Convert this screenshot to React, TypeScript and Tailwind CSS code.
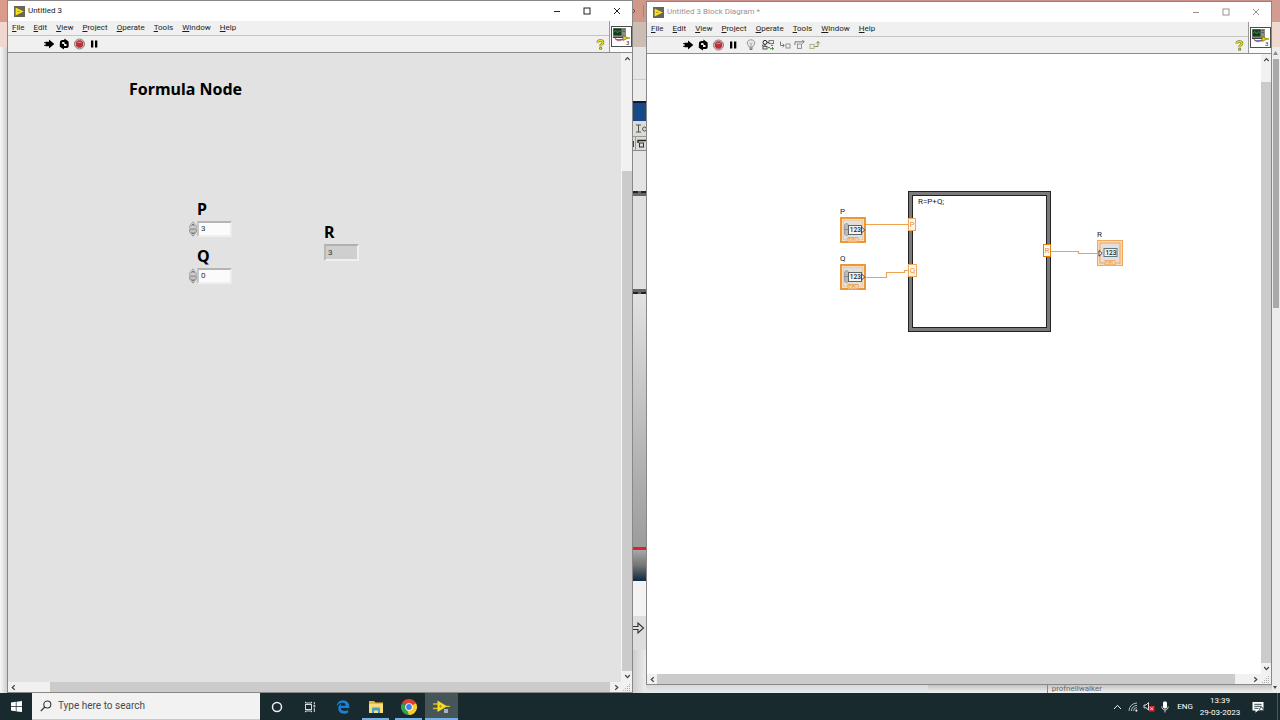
import React from 'react';
import { FaEdgeLegacy } from 'react-icons/fa6';

interface WindowProps {
  title: string;
  active: boolean;
  tools?: React.ReactNode;
  vTrack: string;
  hTrack: string;
  hEnd: string;
  children: React.ReactNode;
}

const MENUS = ['File', 'Edit', 'View', 'Project', 'Operate', 'Tools', 'Window', 'Help'];

const LabviewIcon = () => (
  <svg viewBox="0 0 11 11" className="w-[11px] h-[11px] shrink-0">
    <rect width="11" height="11" fill="#66655a" />
    <path d="M1.6 1.5 L9.8 5.4 L1.6 9.4 Z" fill="#f6e11c" />
    <path d="M3 5.4 H5.6" stroke="#b99b13" strokeWidth="1" />
  </svg>
);

const Chevron = ({ dir }: { dir: 'up' | 'down' | 'left' | 'right' }) => {
  const paths = {
    up: 'M1.2 5.2 L3.5 2.6 L5.8 5.2',
    down: 'M1.2 2 L3.5 4.6 L5.8 2',
    left: 'M4.8 1.2 L2.2 3.5 L4.8 5.8',
    right: 'M2.2 1.2 L4.8 3.5 L2.2 5.8',
  };
  return (
    <svg viewBox="0 0 7 7" className="w-[7px] h-[7px]" fill="none" stroke="#444" strokeWidth="1.2">
      <path d={paths[dir]} />
    </svg>
  );
};

const ToolButton = ({ label, wide, children }: { label: string; wide?: boolean; children: React.ReactNode }) => (
  <button aria-label={label} className={wide ? 'w-4 h-3 shrink-0' : 'w-3 h-3 shrink-0'}>
    <svg viewBox={wide ? '0 0 16 12' : '0 0 12 12'} className="w-full h-full" fill="none">
      {children}
    </svg>
  </button>
);

const RunTools = () => (
  <>
    <ToolButton label="Run">
      <path d="M1 4.6 H3 M1 7.4 H3" stroke="#222" />
      <path d="M2.6 3.8 H6 V1.6 L11.3 6 L6 10.4 V8.2 H2.6 Z" fill="#000" />
    </ToolButton>
    <ToolButton label="Run Continuously">
      <path d="M3 6.2 V4.6 Q3 3 4.6 3 H7" stroke="#000" strokeWidth="2.2" />
      <path d="M6.4 .6 L10.6 3.4 V6 H6.4 Z" fill="#000" />
      <path d="M9.6 5.8 V7.4 Q9.6 9 8 9 H5.4" stroke="#000" strokeWidth="2.2" />
      <path d="M6 11.4 L1.8 8.7 V6 H6 Z" fill="#000" />
      <path d="M4.6 5.4 H6.6 M6 6.8 H8" stroke="#f0f0f0" />
    </ToolButton>
    <ToolButton label="Abort">
      <circle cx="6.5" cy="6" r="5" fill="#f3dcdc" stroke="#7c6d6d" strokeWidth="0.9" />
      <path d="M4.8 2.3 H8.2 L10.2 4.3 V7.7 L8.2 9.7 H4.8 L2.8 7.7 V4.3 Z" fill="#b5343a" />
      <path d="M4.4 4.4 H8.6" stroke="#dc8a8c" />
    </ToolButton>
    <ToolButton label="Pause">
      <rect x="3" y="2.5" width="2.3" height="7" fill="#000" />
      <rect x="7" y="2.5" width="2.3" height="7" fill="#000" />
    </ToolButton>
  </>
);

const DebugTools = () => (
  <div className="flex gap-[3px] ml-[3px]">
    <ToolButton label="Highlight Execution">
      <path d="M4.2 8 C4.2 6.6 2.2 6 2.2 4 C2.2 2 4 .8 6 .8 C8 .8 9.8 2 9.8 4 C9.8 6 7.8 6.6 7.8 8 Z" fill="#e9e9e6" stroke="#8d8d88" strokeWidth="0.9" />
      <path d="M4.8 3.5 L6 6 L7.2 3.5 M6 6 V8" stroke="#aaa" strokeWidth="0.8" />
      <path d="M4.4 9 H7.6 M4.6 10.4 H7.4" stroke="#777" strokeWidth="1.1" />
    </ToolButton>
    <ToolButton label="Retain Wire Values" wide>
      <circle cx="5" cy="3.4" r="2" stroke="#222" />
      <path d="M7 3.4 H9 M5 5.4 V7 M3 5.5 L2.6 7" stroke="#333" />
      <rect x="9" y="1.6" width="4.5" height="3" stroke="#666" strokeWidth="0.9" />
      <rect x="3" y="7.4" width="4" height="2.6" stroke="#444" strokeWidth="0.9" />
      <path d="M8 8.6 H10 M11 6.4 H13" stroke="#555" strokeWidth="0.9" />
      <path d="M10 9.6 H13.5 M12 8 L13.6 9.6 L12 11" stroke="#3b9a36" />
    </ToolButton>
    <ToolButton label="Step Into">
      <path d="M1.5 2.5 V6.5 H5 M3.6 4.8 L5.4 6.5 L3.6 8.2" stroke="#777" />
      <rect x="7" y="5" width="4" height="4" stroke="#888" strokeWidth="0.9" />
    </ToolButton>
    <ToolButton label="Step Over">
      <path d="M1 6 V2.8 H10 M8.4 1 L10.2 2.8 L8.4 4.6" stroke="#777" />
      <rect x="3.5" y="5" width="4" height="4.4" stroke="#888" strokeWidth="0.9" />
    </ToolButton>
    <ToolButton label="Step Out">
      <rect x="1" y="5.4" width="4" height="4" stroke="#a9a878" strokeWidth="0.9" />
      <path d="M5.5 7.5 H9 V2.8 M7.2 4.4 L9 2.4 L10.8 4.4" stroke="#8a8a50" />
    </ToolButton>
  </div>
);

const HelpIcon = () => (
  <svg viewBox="0 0 9 11" className="w-[9px] h-[11px]" fill="none">
    <path d="M1.8 3.6 C1.8 .8 7 .8 7 3.4 C7 5.2 4.6 5 4.6 7.2" stroke="#6a6818" strokeWidth="2.6" />
    <circle cx="4.6" cy="9.3" r="1.5" fill="#6a6818" />
    <path d="M1.8 3.6 C1.8 .8 7 .8 7 3.4 C7 5.2 4.6 5 4.6 7.2" stroke="#e6e01f" strokeWidth="1.5" />
    <circle cx="4.6" cy="9.3" r="0.9" fill="#e6e01f" />
  </svg>
);

const ViIcon = () => (
  <svg viewBox="0 0 21 21" className="w-[21px] h-[21px]">
    <rect x="0.5" y="0.5" width="20" height="20" fill="#fff" stroke="#4d4d4d" />
    <rect x="2" y="2" width="13" height="9" fill="#8b8e86" />
    <rect x="2.5" y="2.5" width="8" height="7" fill="#123f1b" />
    <path d="M3 6 L5 4.5 L6.5 7 L8 4.5 L10 6" stroke="#3f9b4a" fill="none" strokeWidth="0.8" />
    <path d="M11.5 3.5 H14 M11.5 5.5 H14" stroke="#54574f" strokeWidth="0.9" />
    <path d="M2 11.4 H13" stroke="#38281f" />
    <path d="M4 12 C5 15 9 15.5 12 13" stroke="#c26a93" fill="none" strokeWidth="1.3" />
    <path d="M5 13.5 H12" stroke="#4560a8" strokeWidth="0.8" />
    <path d="M12 9.5 L17 12 L12 14.5 Z" fill="#eed51e" stroke="#6d5d12" strokeWidth="0.7" />
    <path d="M16 12 H19" stroke="#b3a012" strokeWidth="1.6" />
    <text x="15" y="19" fontSize="6" fontFamily="Roboto, sans-serif" fill="#222">3</text>
  </svg>
);

const scrollBtn = 'flex items-center justify-center shrink-0';
const captionBtn = 'w-[30px] h-5 flex items-center justify-center';

const VWindow = ({ title, active, tools, vTrack, hTrack, hEnd, children }: WindowProps) => (
  <section className="flex-1 min-w-0 flex flex-col border border-[#8b8787] bg-white">
    <div className="flex items-center h-5 pl-[6px] shrink-0 bg-white">
      <LabviewIcon />
      <h1 className={`flex-1 ml-[3px] text-[8px] leading-3 ${active ? 'text-[#222]' : 'text-[#9b9292]'}`}>{title}</h1>
      <div className={`flex ${active ? 'text-[#222]' : 'text-[#a08f8f]'}`}>
        <button aria-label="Minimize" className={captionBtn}>
          <svg viewBox="0 0 8 8" className="w-2 h-2" stroke="currentColor" fill="none"><path d="M1 4.5 H7" /></svg>
        </button>
        <button aria-label="Maximize" className={captionBtn}>
          <svg viewBox="0 0 8 8" className="w-2 h-2" stroke="currentColor" fill="none"><rect x="1" y="1" width="6" height="6" /></svg>
        </button>
        <button aria-label="Close" className={captionBtn}>
          <svg viewBox="0 0 8 8" className="w-2 h-2" stroke="currentColor" fill="none"><path d="M1 1 L7 7 M7 1 L1 7" /></svg>
        </button>
      </div>
    </div>

    <div className="flex shrink-0 bg-[#f0f0f0] border-b border-[#8c8c8c]">
      <div className="flex-1 min-w-0">
        <nav className="flex gap-[9px] h-[15px] pl-1 items-center border-b border-[#c4c4c4] text-[8px] leading-3 text-[#1d1d1d]">
          {MENUS.map((m) => (
            <button key={m}>
              <span className="underline">{m[0]}</span>{m.slice(1)}
            </button>
          ))}
        </nav>
        <div className="flex items-center gap-[3px] h-4 pl-[35px] pr-1">
          <RunTools />
          {tools}
          <button aria-label="Context Help" className="ml-auto"><HelpIcon /></button>
        </div>
      </div>
      <div className="w-[23px] flex items-center justify-end border-l border-[#9a9a9a] bg-[#fafafa]">
        <ViIcon />
      </div>
    </div>

    <div className="flex flex-1 min-h-0">
      {children}
      <div className="w-[10px] flex flex-col shrink-0 bg-[#f1f1f1]">
        <button aria-label="Scroll up" className={`${scrollBtn} h-[11px]`}><Chevron dir="up" /></button>
        <div className={`shrink-0 ${vTrack}`} />
        <div className="flex-1 bg-[#cbcbcb]" />
        <button aria-label="Scroll down" className={`${scrollBtn} h-[11px]`}><Chevron dir="down" /></button>
      </div>
    </div>
    <div className="h-[10px] flex shrink-0 bg-[#f1f1f1]">
      <button aria-label="Scroll left" className={`${scrollBtn} w-[10px]`}><Chevron dir="left" /></button>
      <div className={hTrack} />
      <div className="flex-1 bg-[#cbcbcb]" />
      <div className={hEnd} />
      <button aria-label="Scroll right" className={`${scrollBtn} w-3`}><Chevron dir="right" /></button>
      <svg viewBox="0 0 10 10" className="w-[10px] h-[10px]" fill="#aaa">
        <path d="M7 2h1v1h-1z M5 4h1v1h-1z M7 4h1v1h-1z M3 6h1v1h-1z M5 6h1v1h-1z M7 6h1v1h-1z M1 8h1v1h-1z M3 8h1v1h-1z M5 8h1v1h-1z M7 8h1v1h-1z" />
      </svg>
    </div>
  </section>
);

const panelLabel = "font-['Noto_Sans','Open_Sans',sans-serif] text-[16px] leading-5 font-bold text-black";

const NumericControl = ({ name, value, className }: { name: string; value: string; className: string }) => (
  <div className={`absolute ${className}`}>
    <label htmlFor={`ctl-${name}`} className={`block pl-2 mb-px ${panelLabel}`}>{name}</label>
    <div className="flex h-[17px] items-center">
      <div className="flex flex-col w-2">
        <button aria-label={`Increment ${name}`}>
          <svg viewBox="0 0 8 8" className="w-2 h-2"><path d="M4 .8 L7.4 5 V7.4 H.6 V5 Z" fill="#d2d2d2" stroke="#a0a0a0" strokeWidth="0.9" /><path d="M2.4 5.2 L4 3 L5.6 5.2" fill="none" stroke="#555" strokeWidth="0.8" /></svg>
        </button>
        <button aria-label={`Decrement ${name}`}>
          <svg viewBox="0 0 8 8" className="w-2 h-2"><path d="M4 7.2 L7.4 3 V.6 H.6 V3 Z" fill="#c8c8c8" stroke="#909090" strokeWidth="0.9" /><path d="M2.4 2.8 L4 5 L5.6 2.8" fill="none" stroke="#555" strokeWidth="0.8" /></svg>
        </button>
      </div>
      <input
        id={`ctl-${name}`}
        defaultValue={value}
        className="w-[35px] h-4 pl-[2px] bg-[#fbfbfb] border-2 border-t-[#b4b4b4] border-l-[#c6c6c6] border-r-[#ececec] border-b-[#efefef] text-[8px] leading-3 text-[#333] outline-none"
      />
    </div>
  </div>
);

const FrontPanel = () => (
  <div className="relative flex-1 bg-[#e2e2e2] border-r border-[#f4f4f4]">
    <h2 className={`absolute left-[121px] top-[26px] whitespace-nowrap ${panelLabel}`}>Formula Node</h2>
    <NumericControl name="P" value="3" className="left-[181px] top-[146px]" />
    <NumericControl name="Q" value="0" className="left-[181px] top-[193px]" />
    <div className="absolute left-[316px] top-[169px]">
      <label htmlFor="ind-R" className={`block ${panelLabel}`}>R</label>
      <output id="ind-R" className="block w-[35px] h-[17px] mt-[2px] pl-[2px] bg-[#cfcfcf] border-2 border-t-[#b0b0b0] border-l-[#b8b8b8] border-r-[#f0f0f0] border-b-[#f0f0f0] text-[8px] leading-[13px] text-[#333]">
        3
      </output>
    </div>
  </div>
);

const Terminal = ({ name, indicator, className }: { name: string; indicator?: boolean; className: string }) => (
  <div className={`absolute ${className}`}>
    <div className="text-[8px] leading-[11px] text-[#222]">{name}</div>
    {indicator ? (
      <svg viewBox="0 0 26 26" className="w-[26px] h-[26px] block">
        <rect x="0.5" y="0.5" width="25" height="25" fill="#fbd9b5" stroke="#f0a65c" />
        <rect x="3" y="3" width="20" height="20" fill="#e1e0df" stroke="#f0a65c" />
        <rect x="7" y="8.5" width="13" height="8" fill="#eef2f4" stroke="#5e7480" />
        <text x="8.4" y="15" fontSize="6.5" fontFamily="Roboto, sans-serif" fontWeight="500" fill="#222">123</text>
        <path d="M2 10.5 L5.2 13.3 L2 16.2 Z" fill="#fff" stroke="#333" strokeWidth="0.9" />
        <rect x="8" y="20.5" width="10" height="5" fill="#fbe3c8" stroke="#f0a65c" strokeWidth="0.8" />
        <text x="8.8" y="25" fontSize="5" fontFamily="Roboto, sans-serif" fill="#e8892b">DBL</text>
      </svg>
    ) : (
      <svg viewBox="0 0 26 26" className="w-[26px] h-[26px] block">
        <rect x="1" y="1" width="24" height="24" fill="#fff" stroke="#ec8c24" strokeWidth="1.8" />
        <rect x="3" y="3" width="20" height="20" fill="#e1e0df" stroke="#f3ba7c" />
        <path d="M4.5 8 L6.5 6 L8.5 8 V17 L6.5 19 L4.5 17 Z" fill="#b9b9b9" stroke="#8c8c8c" strokeWidth="0.7" />
        <path d="M4.5 12.5 H8.5" stroke="#777" strokeWidth="0.7" />
        <rect x="8.5" y="8.5" width="13" height="9" fill="#f4f4f4" stroke="#5e6468" />
        <text x="9.8" y="15.4" fontSize="6.5" fontFamily="Roboto, sans-serif" fontWeight="500" fill="#222">123</text>
        <path d="M21.6 10.2 L24.8 13 L21.6 15.8 Z" fill="#fff" stroke="#333" strokeWidth="0.9" />
        <rect x="8" y="20.5" width="10" height="5" fill="#fbe3c8" stroke="#ec9b45" strokeWidth="0.8" />
        <text x="8.8" y="25" fontSize="5" fontFamily="Roboto, sans-serif" fill="#e8892b">DBL</text>
      </svg>
    )}
  </div>
);

const tunnel = 'absolute flex items-center justify-center h-[13px] bg-[#fff6ea] text-[8px] leading-3 text-[#e9953f]';

const BlockDiagram = () => (
  <div className="relative flex-1 bg-white">
    <div className="absolute left-[261px] top-[137px] w-[143px] h-[141px] border border-[#222] bg-[#7b7b7b] p-[3px]">
      <div className="h-full border border-[#222] bg-white pl-[5px] text-[8px] leading-3 text-[#222]">R=P+Q;</div>
    </div>
    <svg viewBox="0 0 300 80" className="absolute left-[210px] top-[160px] w-[300px] h-[80px]" fill="none" stroke="#f0a24e" strokeWidth="1.2">
      <path d="M8 10.5 H52" />
      <path d="M8 63.5 H29.5 V58.5 H47.5 V56.5 H52" />
      <path d="M193 37.5 H221.5 V39.5 H241" />
    </svg>
    <Terminal name="P" className="left-[193px] top-[152px]" />
    <Terminal name="Q" className="left-[193px] top-[199px]" />
    <Terminal name="R" indicator className="left-[450px] top-[175px]" />
    <div className={`${tunnel} left-[261px] top-[164px] w-2 border border-[#f0a65c]`}>P</div>
    <div className={`${tunnel} left-[261px] top-[210px] w-[9px] border border-[#f0a65c]`}>Q</div>
    <div className={`${tunnel} left-[396px] top-[190px] w-2 border border-[#e37f12]`}>R</div>
  </div>
);

// Slice of the browser that shows between the two windows
const BackdropStrip = () => (
  <div className="w-[13px] shrink-0 flex flex-col overflow-hidden bg-[#e9e9e9]">
    <div className="h-[22px] shrink-0 bg-[#cf9888]">
      <svg viewBox="0 0 14 22" className="w-[14px] h-[22px]" fill="none">
        <path d="M0 9 L2 11 L0 13" stroke="#6b4d46" />
        <path d="M10.5 5 V17" stroke="#b17c6f" />
      </svg>
    </div>
    <div className="h-[25px] shrink-0 bg-[#cbbdb4]" />
    <div className="h-[32px] shrink-0 bg-[#e6e6e6]" />
    <div className="h-[22px] shrink-0 bg-[#ececec] border-t border-[#ccc]" />
    <div className="h-5 shrink-0 bg-[#164a87] border-t-2 border-[#0a1c38]" />
    <div className="h-[30px] shrink-0 bg-[#dcdbd8] border-b border-[#888]">
      <svg viewBox="0 0 14 30" className="w-[14px] h-[30px]" fill="none" stroke="#555">
        <path d="M3 4 H8 M5.5 4 V11 M3 11 H8" />
        <circle cx="11.5" cy="8" r="2" />
        <path d="M0 15.5 H14 M2.5 16 V30" stroke="#999" />
        <path d="M5 22 V19.5 H13" stroke="#222" strokeWidth="1.4" />
        <rect x="6.5" y="22" width="4" height="4" stroke="#333" />
        <path d="M0.5 20 V26" stroke="#444" />
      </svg>
    </div>
    <div className="h-10 shrink-0 bg-[#e4e4e4]" />
    <div className="h-[5px] shrink-0 bg-[#666] border-t-2 border-dashed border-[#222]" />
    <div className="h-[93px] shrink-0 bg-[#e0e0e0]" />
    <div className="h-[5px] shrink-0 bg-[#666] border-b-2 border-dashed border-[#222]" />
    <div className="flex-1 bg-linear-to-b from-[#e2e2e2] to-[#9c9c9c]" />
    <div className="h-[3px] shrink-0 bg-[#d8232a]" />
    <div className="h-[31px] shrink-0 bg-linear-to-b from-[#a9a9a9] via-[#757575] to-[#0b2a3f]" />
    <div className="h-[35px] shrink-0 bg-[#f3f3f3]" />
    <div className="h-[34px] shrink-0 bg-[#dedede]">
      <svg viewBox="0 0 14 24" className="w-[14px] h-6" fill="none" stroke="#333" strokeWidth="1.1">
        <path d="M0 10.5 H5 V7 L10.5 12 L5 17 V13.5 H0" />
      </svg>
    </div>
    <div className="h-[43px] shrink-0 bg-linear-to-r from-[#cfcfcf] to-[#ececec]" />
  </div>
);

const taskBtn = 'relative w-[33px] h-full flex items-center justify-center';

const Taskbar = () => (
  <footer className="h-[27px] shrink-0 flex items-stretch bg-[#182a2e] text-white">
    <button aria-label="Start" className="w-8 flex items-center justify-center">
      <svg viewBox="0 0 11 11" className="w-[11px] h-[11px]" fill="#fff">
        <path d="M0 1.5 L4.8 .8 V5.2 H0 Z M5.5 .7 L11 0 V5.2 H5.5 Z M0 5.9 H4.8 V10.3 L0 9.6 Z M5.5 5.9 H11 V11 L5.5 10.4 Z" />
      </svg>
    </button>
    <div className="w-[228px] flex items-center bg-[#f2f2f2] pl-2 border-b border-[#c9c9c9]">
      <svg viewBox="0 0 12 12" className="w-3 h-3" fill="none" stroke="#333" strokeWidth="1.1">
        <circle cx="7.3" cy="4.5" r="3.5" /><path d="M4.8 7 L.8 11" />
      </svg>
      <input
        aria-label="Search"
        placeholder="Type here to search"
        className="flex-1 min-w-0 ml-[6px] bg-transparent text-[10px] leading-4 placeholder:text-[#4a4a4a] outline-none"
      />
    </div>
    <button aria-label="Cortana" className={taskBtn}>
      <svg viewBox="0 0 12 12" className="w-3 h-3" fill="none"><circle cx="6" cy="6" r="4.5" stroke="#eee" strokeWidth="1.5" /></svg>
    </button>
    <button aria-label="Task View" className={taskBtn}>
      <svg viewBox="0 0 12 12" className="w-3 h-3" fill="none" stroke="#d8dcdc">
        <rect x="1.5" y="3.5" width="6" height="5" />
        <path d="M1.5 .8 V2 H7.5 V.8 M1.5 11.2 V10 H7.5 V11.2 M10.3 1 V3.4 M10.3 6.5 V11" /><path d="M9.3 5 H11.3" strokeWidth="1.6" />
      </svg>
    </button>
    <button aria-label="Microsoft Edge" className={taskBtn}>
      <FaEdgeLegacy className="w-[14px] h-[14px] text-[#1b7fd6]" />
    </button>
    <button aria-label="File Explorer" className={taskBtn}>
      <svg viewBox="0 0 14 12" className="w-[14px] h-3">
        <path d="M0 0 H5 L6.5 1.5 H14 V12 H0 Z" fill="#e9b93a" />
        <path d="M0 3 H14 V12 H0 Z" fill="#f8dc77" />
        <path d="M3 12 V7.5 Q3 6.5 4 6.5 H10 Q11 6.5 11 7.5 V12 H9 V9.5 H5 V12 Z" fill="#4aa0c9" />
      </svg>
      <span className="absolute bottom-0 inset-x-[3px] h-[2px] bg-[#76b0e6]" />
    </button>
    <button aria-label="Google Chrome" className={taskBtn}>
      <svg viewBox="0 0 16 16" className="w-4 h-4">
        <path d="M8 8 L1.07 4 A8 8 0 0 1 14.93 4 Z" fill="#e0402f" />
        <path d="M8 8 L1.07 4 A8 8 0 0 0 8 16 Z" fill="#33a24f" />
        <path d="M8 8 L14.93 4 A8 8 0 0 1 8 16 Z" fill="#fbcb26" />
        <path d="M8 4.2 H15 L14.93 4 H8 Z" fill="#e0402f" />
        <path d="M11.3 10 L8 16 L6 11 Z" fill="#fbcb26" />
        <circle cx="8" cy="8" r="3.8" fill="#fff" />
        <circle cx="8" cy="8" r="2.9" fill="#3f7fe8" />
      </svg>
      <span className="absolute bottom-0 inset-x-[3px] h-[2px] bg-[#76b0e6]" />
    </button>
    <button aria-label="LabVIEW" className={`${taskBtn} bg-[#465558]`}>
      <svg viewBox="0 0 17 13" className="w-[17px] h-[13px]" fill="none">
        <path d="M0 4 H6 M0 8.5 H6 M12 6.3 H17" stroke="#d8b91e" strokeWidth="1.3" />
        <path d="M4.5 .5 L14 6.3 L4.5 12 Z" fill="#f6dd22" />
        <path d="M6 6.3 H9 M7.5 4.8 V7.8" stroke="#a98b12" strokeWidth="0.8" />
        <rect x="11" y="9" width="4" height="4" fill="#a9b2b4" />
      </svg>
      <span className="absolute bottom-0 inset-x-0 h-[2px] bg-[#76b0e6]" />
    </button>

    <div className="ml-auto flex items-center text-[8px] leading-3">
      <button aria-label="Show hidden icons" className="w-4 flex justify-center">
        <svg viewBox="0 0 9 6" className="w-[9px] h-[6px]" fill="none" stroke="#eee"><path d="M1 5 L4.5 1.3 L8 5" /></svg>
      </button>
      <button aria-label="Network" className="w-4 flex justify-center">
        <svg viewBox="0 0 10 10" className="w-[10px] h-[10px]" fill="none" stroke="#c3cacb" strokeWidth="0.9">
          <path d="M1 9 A8 8 0 0 1 9 1 M3.4 9 A5.6 5.6 0 0 1 9 3.4 M5.6 9 A3.4 3.4 0 0 1 9 5.6" /><circle cx="8.4" cy="8.6" r="0.8" fill="#fff" />
        </svg>
      </button>
      <button aria-label="Volume muted" className="w-4 flex justify-center">
        <svg viewBox="0 0 12 11" className="w-3 h-[11px]" fill="none">
          <path d="M1 4 H3 L5.5 1.5 V9 L3 6.8 H1 Z" stroke="#eee" strokeWidth="0.9" />
          <rect x="6" y="5" width="5.5" height="5.5" fill="#d42a33" /><path d="M7.4 6.4 L10 9 M10 6.4 L7.4 9" stroke="#fff" strokeWidth="0.8" />
        </svg>
      </button>
      <button aria-label="Microphone" className="w-4 flex justify-center">
        <svg viewBox="0 0 8 12" className="w-2 h-3" fill="none">
          <rect x="2" y="0.5" width="4" height="7" rx="1.4" fill="#fff" /><path d="M.8 5.5 C.8 10 7.2 10 7.2 5.5 M4 9 V11.5" stroke="#ddd" strokeWidth="0.9" />
        </svg>
      </button>
      <span className="w-6 text-center">ENG</span>
      <div className="w-[46px] flex flex-col items-center">
        <time>13:39</time>
        <time>29-03-2023</time>
      </div>
      <button aria-label="Notifications" className="w-[34px] flex justify-center pr-1">
        <svg viewBox="0 0 12 12" className="w-3 h-3" fill="none">
          <path d="M.5 1 H11.5 V9.5 H6 L3.5 11.8 V9.5 H.5 Z" fill="#fff" />
          <path d="M2.3 3.3 H9.7 M2.3 5.3 H9.7 M2.3 7.3 H6.5" stroke="#26383b" strokeWidth="0.9" />
          <circle cx="9.4" cy="8.2" r="1.8" stroke="#26383b" strokeWidth="0.9" />
        </svg>
      </button>
      <span className="h-[27px] w-[3px] border-l border-[#4a595c]" />
    </div>
  </footer>
);

export default function App() {
  return (
    <div className="h-screen flex flex-col overflow-hidden bg-[#eeeeee] font-['Roboto','Noto_Sans',sans-serif]">
      <main className="flex flex-1 min-h-0">
        <div className="w-[7px] shrink-0 flex flex-col">
          <div className="h-[22px] bg-[#dc9a8a]" />
          <div className="h-[25px] bg-[#f0d8d0]" />
          <div className="flex-1 bg-linear-to-r from-[#f8f8f8] to-[#cfcfcf]" />
        </div>

        <div className="flex-1 min-w-0 flex flex-col">
          <VWindow title="Untitled 3" active vTrack="h-[107px]" hTrack="w-8" hEnd="">
            <FrontPanel />
          </VWindow>
        </div>

        <BackdropStrip />

        <div className="flex-1 min-w-0 flex flex-col bg-[#c98f88] pt-px">
          <VWindow title="Untitled 3 Block Diagram *" active={false} tools={<DebugTools />} vTrack="h-[17px]" hTrack="" hEnd="w-[14px]">
            <BlockDiagram />
          </VWindow>
          <div className="h-2 shrink-0 flex bg-linear-to-b from-[#c4c4c4] to-[#f2f2f2] text-[8px] leading-[8px] text-[#666]">
            <div className="w-[45%] bg-[#dfe9e8]/60" />
            <div className="flex-1" />
            <div className="w-[36%] border-l border-[#888] pl-1">profneilwalker</div>
          </div>
        </div>

        <div className="w-2 shrink-0 flex flex-col items-stretch">
          <div className="h-[22px] shrink-0 bg-[#d29c90]" />
          <div className="h-[25px] shrink-0 bg-[#efd8ce]" />
          <div className="flex-1 flex flex-col bg-[#ececec] pl-px">
            <svg viewBox="0 0 7 12" className="w-[7px] h-3 shrink-0" fill="#8b8b8b"><path d="M0 8 L2.5 4 L5 8 Z" /></svg>
            <div className="h-[249px] w-[6px] shrink-0 bg-[#a9a9a9]" />
            <svg viewBox="0 0 7 12" className="w-[7px] h-3 shrink-0 mt-auto" fill="#444"><path d="M0 5 H4 L2 8 Z" /></svg>
          </div>
        </div>
      </main>
      <Taskbar />
    </div>
  );
}
